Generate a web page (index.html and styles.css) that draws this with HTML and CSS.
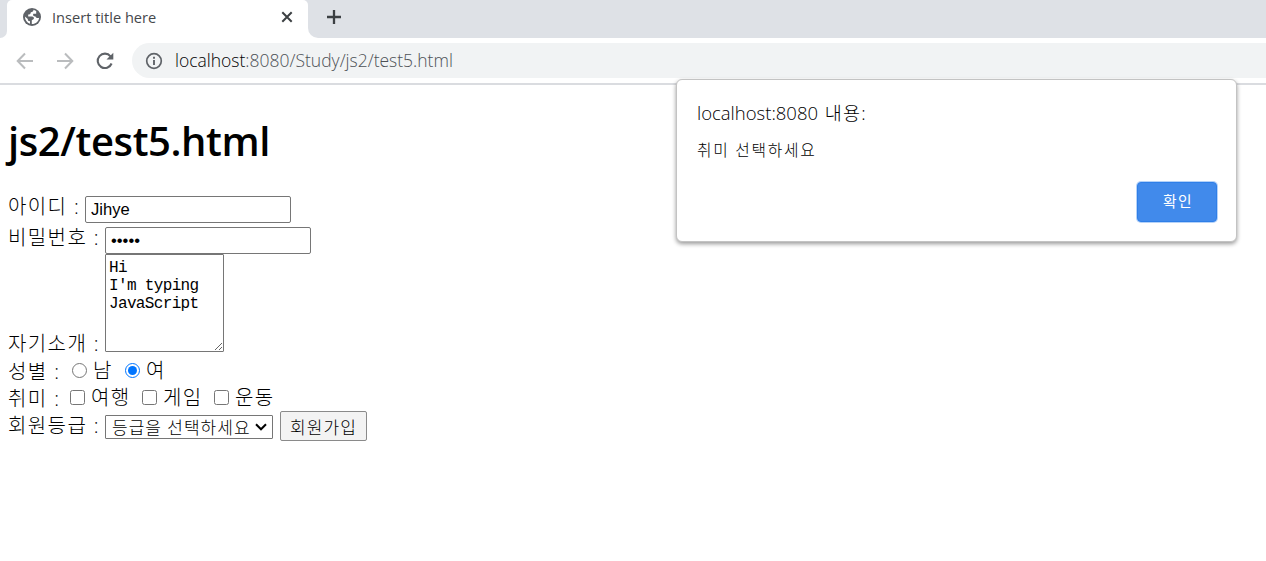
FILE: index.html
```html
<!DOCTYPE html>
<html lang="ko">
<head>
    <meta charset="UTF-8">
    <title>Insert title here</title>
    <link rel="stylesheet" href="styles.css">
</head>
<body>
    <header class="browser">
        <div class="tabs">
            <div class="prevTab"></div>
            <div class="tab">
                <svg class="globe" width="18" height="18" viewBox="0 0 18 18">
                    <circle cx="9" cy="9" r="9" fill="#5f6368"/>
                    <path d="M10.500 1.800C10.500 3.500 9.500 4 7.800 4.200c0 1.600-1 2.300-2.600 2.300V8.500H9c1.600 0 2.200 1.200 1.800 2.500L8.800 12.200v3.900c3.900.1 7-2.800 7.300-6.300-1.300.5-3 .2-3.600-1.300-2.100 0-2.900-1.200-2.200-2.700h2.900V2.900zM1.900 8.500c0 3.400 2.100 6.200 5.100 7.200v-2.400c-1.600 0-2.300-1-2.200-2.300z" fill="#fff"/>
                </svg>
                <span class="tabTitle">Insert title here</span>
                <svg width="12" height="12" viewBox="0 0 12 12"><path d="M1.300 1.300l9.400 9.400M10.700 1.300l-9.400 9.400" stroke="#3c4043" stroke-width="2"/></svg>
            </div>
            <div class="newTab">
                <svg width="16" height="16" viewBox="0 0 16 16"><path d="M8 1v14M1 8h14" stroke="#3c4043" stroke-width="2.300"/></svg>
            </div>
        </div>
        <div class="toolbar">
            <svg class="arrow" width="18" height="18" viewBox="0 0 18 18"><path d="M17 9H2M9 1.500L1.700 9 9 16.500"/></svg>
            <svg class="arrow" width="18" height="18" viewBox="0 0 18 18"><path d="M1 9h15M9 1.500L16.300 9 9 16.500"/></svg>
            <svg class="reload" width="18" height="18" viewBox="0 0 18 18"><path d="M14.500 4.300A7.200 7.200 0 1 0 15.600 11.500" fill="none" stroke="#5f6368" stroke-width="2.100"/><path d="M17.300 .8v6.800h-6.800z" fill="#5f6368"/></svg>
            <div class="address">
                <svg width="18" height="18" viewBox="0 0 18 18"><circle cx="9" cy="9" r="7.300" fill="none" stroke="#5f6368" stroke-width="1.700"/><path d="M9 8v5M9 4.800v1.900" stroke="#5f6368" stroke-width="1.900"/></svg>
                <span class="url"><b>localhost</b>:8080/Study/js2/test5.html</span>
            </div>
        </div>
    </header>

    <main>
        <h1>js2/test5.html</h1>
        <form>
            <div class="row rowId"><label class="short">아이디 :</label><input type="text" class="field" value="Jihye"></div>
            <div class="row rowPw"><label class="long">비밀번호 :</label><input type="password" class="field" value="12345"></div>
            <div class="row rowIntro"><label class="long">자기소개 :</label><textarea>Hi
I'm typing
JavaScript</textarea></div>
            <div class="row choices">
                <span class="name">성별 :</span>
                <label class="man"><input type="radio" name="gender">남</label>
                <label><input type="radio" name="gender" checked>여</label>
            </div>
            <div class="row choices">
                <span class="name hobbyName">취미 :</span>
                <label class="hobby"><input type="checkbox">여행</label>
                <label class="hobby"><input type="checkbox">게임</label>
                <label class="hobby"><input type="checkbox">운동</label>
            </div>
            <div class="row rowLevel">
                <label class="long">회원등급 :</label>
                <div class="select">등급을 선택하세요<svg width="12" height="8" viewBox="0 0 12 8"><path d="M1 1.300l5 5 5-5" fill="none" stroke="#000" stroke-width="2"/></svg></div>
                <button type="button" class="join">회원가입</button>
            </div>
        </form>
    </main>

    <div class="alert">
        <p class="origin">localhost:8080 <span>내용:</span></p>
        <p class="msg">취미 선택하세요</p>
        <button type="button" class="ok">확인</button>
    </div>
</body>
</html>
```
FILE: styles.css
```css
* {
    box-sizing: border-box;
}
body {
    margin: 0;
    height: 561px;
    overflow: hidden;
    background: #fff;
    color: #000;
    font-family: "Open Sans", "Noto Sans CJK KR", sans-serif;
}
.browser {
    height: 85px;
    border-bottom: 2px solid #dadce0;
}
.tabs {
    display: flex;
    height: 38px;
    background: #fff;
}
.prevTab {
    width: 7px;
    background: #dee1e6;
    border-bottom-right-radius: 8px;
}
.tab {
    display: flex;
    align-items: center;
    width: 301px;
    padding: 0 15px 4px 16px;
    background: #fff;
    border-radius: 5px 5px 0 0;
    box-shadow: 0 -8px 0 #dee1e6;
}
.tabTitle {
    flex: 1;
    margin-left: 11px;
    padding-bottom: 1px;
    font-size: 14.6px;
    color: #45484c;
}
.newTab {
    flex: 1;
    padding: 9px 18px;
    background: #dee1e6;
    border-bottom-left-radius: 10px;
}
.newTab svg {
    display: block;
}
.toolbar {
    display: flex;
    align-items: center;
    height: 45px;
    padding-left: 16px;
}
.arrow {
    margin-right: 22px;
    fill: none;
    stroke: #babcbe;
    stroke-width: 2;
}
.reload {
    margin-right: 18px;
}
.address {
    display: flex;
    flex: 1;
    align-items: center;
    height: 35px;
    padding-left: 13px;
    background: #f1f3f4;
    border-radius: 18px 0 0 18px;
}
.url {
    margin-left: 12px;
    padding-bottom: 1px;
    font-size: 17.5px;
    font-weight: 300;
    color: #4d5156;
}
.url b {
    font-weight: 300;
    color: #000;
}
main {
    padding: 29px 8px 0;
    font-size: 20px;
    font-weight: 300;
}
h1 {
    height: 82px;
    margin: 0;
    font-size: 40px;
    font-weight: 600;
    line-height: 54px;
    letter-spacing: -0.4px;
}
.row {
    display: flex;
    letter-spacing: 1.4px;
}
.short {
    width: 77px;
}
.long {
    width: 97px;
}
.short, .long {
    white-space: nowrap;
    line-height: 22px;
}
.rowId {
    height: 31px;
}
.rowPw {
    height: 27px;
}
.rowIntro {
    height: 98px;
    align-items: flex-end;
}
.rowIntro label {
    line-height: 16px;
}
.field {
    width: 206px;
    height: 27px;
    padding: 1px 5px;
    border: 1px solid #767676;
    border-radius: 2px;
    font: 16.6px "Liberation Sans", Arial, sans-serif;
}
textarea {
    width: 119px;
    height: 98px;
    margin: 0;
    padding: 4px 3px;
    border: 1px solid #767676;
    border-radius: 1px;
    font: 16px/18px "Liberation Mono", monospace;
    letter-spacing: -0.65px;
    overflow: hidden;
}
.choices {
    height: 27px;
    padding-top: 5px;
    line-height: 29px;
}
.choices .name {
    width: 62px;
}
.choices .hobbyName {
    width: 60px;
}
.choices label {
    display: flex;
    align-items: center;
    height: 27px;
}
.choices input {
    width: 15px;
    height: 15px;
    margin: 0 6px 0 2px;
}
.choices .man {
    width: 53px;
}
.hobby {
    width: 72px;
}
.rowLevel {
    height: 30px;
    margin-top: 5px;
}
.rowLevel .long {
    line-height: 29px;
}
.select {
    display: flex;
    align-items: center;
    justify-content: space-between;
    width: 168px;
    height: 24px;
    margin: 4px 7px 0 0;
    padding: 0 5px 1px 6px;
    border: 1px solid #767676;
    border-radius: 1px;
    font-size: 17px;
    letter-spacing: 1px;
    white-space: nowrap;
}
.join {
    width: 87px;
    height: 30px;
    padding: 0;
    background: #f3f3f3;
    border: 1px solid #8a8a8a;
    border-radius: 2px;
    font: 300 17px "Noto Sans CJK KR", sans-serif;
    letter-spacing: 1.1px;
}
/* 경고창 */
.alert {
    position: absolute;
    top: 79px;
    left: 676px;
    width: 561px;
    height: 163px;
    padding: 20px 19px 19px 20px;
    background: #fff;
    border: 1px solid #c3c3c3;
    border-radius: 6px;
    box-shadow: 0 2px 4px rgba(0, 0, 0, 0.4);
    color: #000;
    font-weight: 300;
}
.alert p {
    margin: 0;
}
.origin {
    height: 38px;
    font-size: 18.5px;
    line-height: 26px;
}
.origin span {
    margin-left: 2px;
    letter-spacing: 1.2px;
}
.msg {
    font-size: 15.8px;
    line-height: 24px;
    letter-spacing: 1.7px;
}
.ok {
    display: block;
    width: 80px;
    height: 40px;
    margin: 20px 0 0 auto;
    padding: 0 0 3px 2px;
    background: #418aeb;
    border: 1px solid #2f7fe8;
    border-radius: 4px;
    box-shadow: 0 0 0 1px #b5d2f8;
    color: #fff;
    font: 400 14.8px "Noto Sans CJK KR", sans-serif;
    letter-spacing: 1.4px;
}
```
